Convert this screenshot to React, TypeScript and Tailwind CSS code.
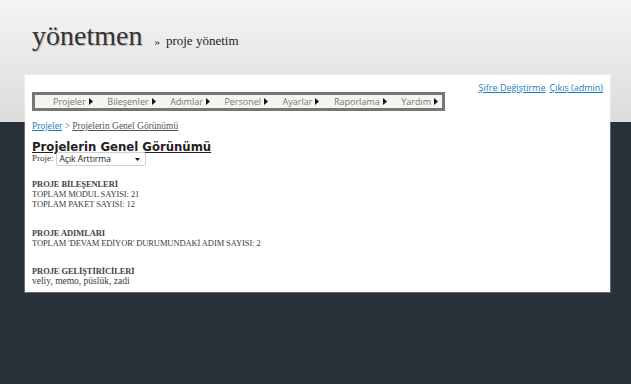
import React from "react";

const serif = { fontFamily: '"Liberation Serif", Georgia, serif' };
const sans = { fontFamily: '"Open Sans", "DejaVu Sans", sans-serif' };

function Arrow() {
  return (
    <svg width="4" height="7" viewBox="0 0 4 7" className="ml-[3px] inline-block">
      <path d="M0 0 L4 3.5 L0 7 Z" fill="#111" />
    </svg>
  );
}

const menu = ["Projeler", "Bileşenler", "Adımlar", "Personel", "Ayarlar", "Raporlama", "Yardım"];

export default function App() {
  return (
    <div className="h-[384px] w-[631px] overflow-hidden bg-[linear-gradient(to_bottom,#f4f4f4_0px,#dcdcdc_122px,#29313a_122px)]">
      <div className="flex items-baseline pl-[32px] pt-[19px] h-[75px]" style={serif}>
        <span className="text-[28px] leading-[34px] text-[#333] [text-shadow:1px_1px_1px_#bbb]">yönetmen</span>
        <span className="ml-[12px] text-[11px] text-[#333]">»</span>
        <span className="ml-[6px] text-[13px] text-[#222]">proje yönetim</span>
      </div>
      <div className="ml-[25px] w-[585px] h-[217px] bg-white px-[7px] shadow-[0_0_0_1px_rgba(255,255,255,0.28)]">
        <div className="flex justify-end gap-[4px] pt-[7px] pr-[-2px] text-[9px] leading-[11px] text-[#1b7dc2] underline" style={sans}>
          <span>Şifre Değiştirme</span>
          <span>Çıkış (admin)</span>
        </div>
        <div className="mt-[-1px] w-[413px] h-[19px] border-[3px] border-[#777] bg-[#f6f4ef] flex items-center pl-[18px] gap-[14.5px] text-[9px] text-[#777]" style={sans}>
          {menu.map((m) => (
            <span key={m} className="flex items-center">
              {m}
              <Arrow />
            </span>
          ))}
        </div>
        <div className="mt-[10px] text-[9.5px] leading-[11px] text-[#555]" style={serif}>
          <span className="text-[#1b7dc2] underline">Projeler</span>
          <span> &gt; </span>
          <span className="underline">Projelerin Genel Görünümü</span>
        </div>
        <div className="mt-[7px] text-[13px] leading-[15px] font-bold text-[#222] underline" style={{ fontFamily: '"DejaVu Sans Condensed", "DejaVu Sans", Verdana, sans-serif' }}>
          Projelerin Genel Görünümü
        </div>
        <div className="flex items-center mt-[-2px] text-[9px] text-[#333]" style={serif}>
          <span>Proje:</span>
          <div className="ml-[2px] w-[90px] h-[14px] border border-[#d0d0d0] rounded-[2px] flex items-center justify-between pl-[3px] pr-[5px] text-[8.5px] text-[#222]" style={sans}>
            <span>Açık Arttırma</span>
            <svg width="5" height="3" viewBox="0 0 5 3"><path d="M0 0 H5 L2.5 3 Z" fill="#111" /></svg>
          </div>
        </div>
        <div className="mt-[13px] text-[8.5px] leading-[10px] text-[#3a3a3a] tracking-[-0.1px]" style={serif}>
          <div className="font-bold text-[#444]">PROJE BİLEŞENLERİ</div>
          <div>TOPLAM MODUL SAYISI: 21</div>
          <div>TOPLAM PAKET SAYISI: 12</div>
          <div className="mt-[19px] font-bold text-[#444]">PROJE ADIMLARI</div>
          <div>TOPLAM 'DEVAM EDİYOR' DURUMUNDAKİ ADIM SAYISI: 2</div>
          <div className="mt-[18px] font-bold text-[#444]">PROJE GELİŞTİRİCİLERİ</div>
          <div className="text-[9.5px] tracking-normal">veliy, memo, püslük, zadi</div>
        </div>
      </div>
    </div>
  );
}
